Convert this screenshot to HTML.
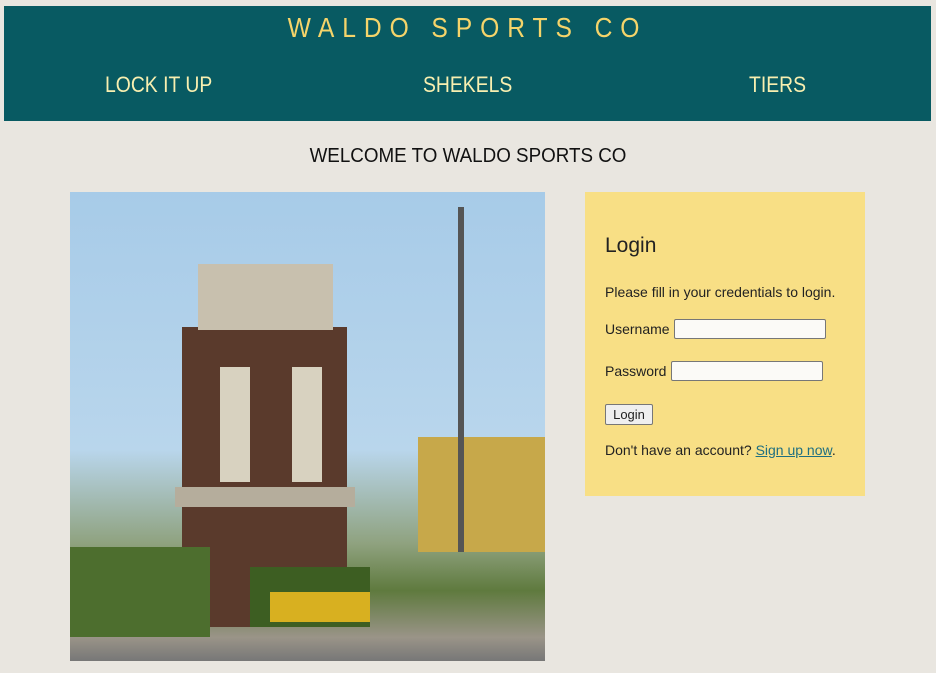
<!DOCTYPE html>
<html><head><style>
body{margin:0;background:#e9e6e0;font-family:"Liberation Sans",sans-serif;width:936px;height:673px;overflow:hidden;position:relative}
.hdr{position:absolute;left:4px;top:6px;width:927px;height:115px;background:#085a62}
.title{position:absolute;top:6px;left:0;width:100%;text-align:center;color:#f5d46a;font-size:28px;letter-spacing:9px;transform:scaleX(0.88)}
.nav{position:absolute;top:66px;color:#f8efb0;font-size:22px;transform:scaleX(0.88);transform-origin:left}
.wel{position:absolute;top:145px;left:0;width:936px;text-align:center;font-size:20px;color:#111;transform:scaleX(0.94)}
.img{position:absolute;left:70px;top:192px;width:475px;height:469px;background:linear-gradient(#a7cbe8 0%,#b9d6ec 55%,#8fa27f 75%,#5f7a3e 85%,#9a9488 95%,#777 100%);overflow:hidden}
.box{position:absolute;left:585px;top:192px;width:280px;height:304px;background:#f8df85;color:#222}
.box .p{position:absolute;left:20px;font-size:14px}
input{position:absolute;height:16px;border:1px solid #777;border-radius:2px;background:#fbfaf7;padding:1px}
</style></head><body>
<div class="hdr">
<div class="title">WALDO SPORTS CO</div>
<div class="nav" style="left:101px">LOCK IT UP</div>
<div class="nav" style="left:419px">SHEKELS</div>
<div class="nav" style="left:745px">TIERS</div>
</div>
<div class="wel">WELCOME TO WALDO SPORTS CO</div>
<div class="img">
<div style="position:absolute;left:112px;top:135px;width:165px;height:300px;background:#5a3a2c"></div>
<div style="position:absolute;left:128px;top:72px;width:135px;height:66px;background:#c8c0ae"></div>
<div style="position:absolute;left:105px;top:295px;width:180px;height:20px;background:#b5ad9c"></div>
<div style="position:absolute;left:150px;top:175px;width:30px;height:115px;background:#d8d2c0"></div>
<div style="position:absolute;left:222px;top:175px;width:30px;height:115px;background:#d8d2c0"></div>
<div style="position:absolute;left:348px;top:245px;width:127px;height:115px;background:#c7a84a"></div>
<div style="position:absolute;left:388px;top:15px;width:6px;height:345px;background:#555"></div>
<div style="position:absolute;left:0;top:355px;width:140px;height:90px;background:#4d6e2e"></div>
<div style="position:absolute;left:180px;top:375px;width:120px;height:60px;background:#3d5e22"></div>
<div style="position:absolute;left:200px;top:400px;width:100px;height:30px;background:#d8b020"></div>
</div>
<div class="box">
<div class="p" style="top:42px;font-size:21px">Login</div>
<div class="p" style="top:92px">Please fill in your credentials to login.</div>
<div class="p" style="top:129px">Username</div>
<input style="left:674px;top:319px;width:148px;position:fixed">
<div class="p" style="top:171px">Password</div>
<input style="left:671px;top:361px;width:148px;position:fixed">
<div style="position:absolute;left:20px;top:212px;width:46px;height:19px;border:1px solid #777;border-radius:2px;background:#efefef;font-size:13px;text-align:center;line-height:19px">Login</div>
<div class="p" style="top:250px">Don't have an account? <span style="color:#1f6f80;text-decoration:underline">Sign up now</span>.</div>
</div>
</body></html>
